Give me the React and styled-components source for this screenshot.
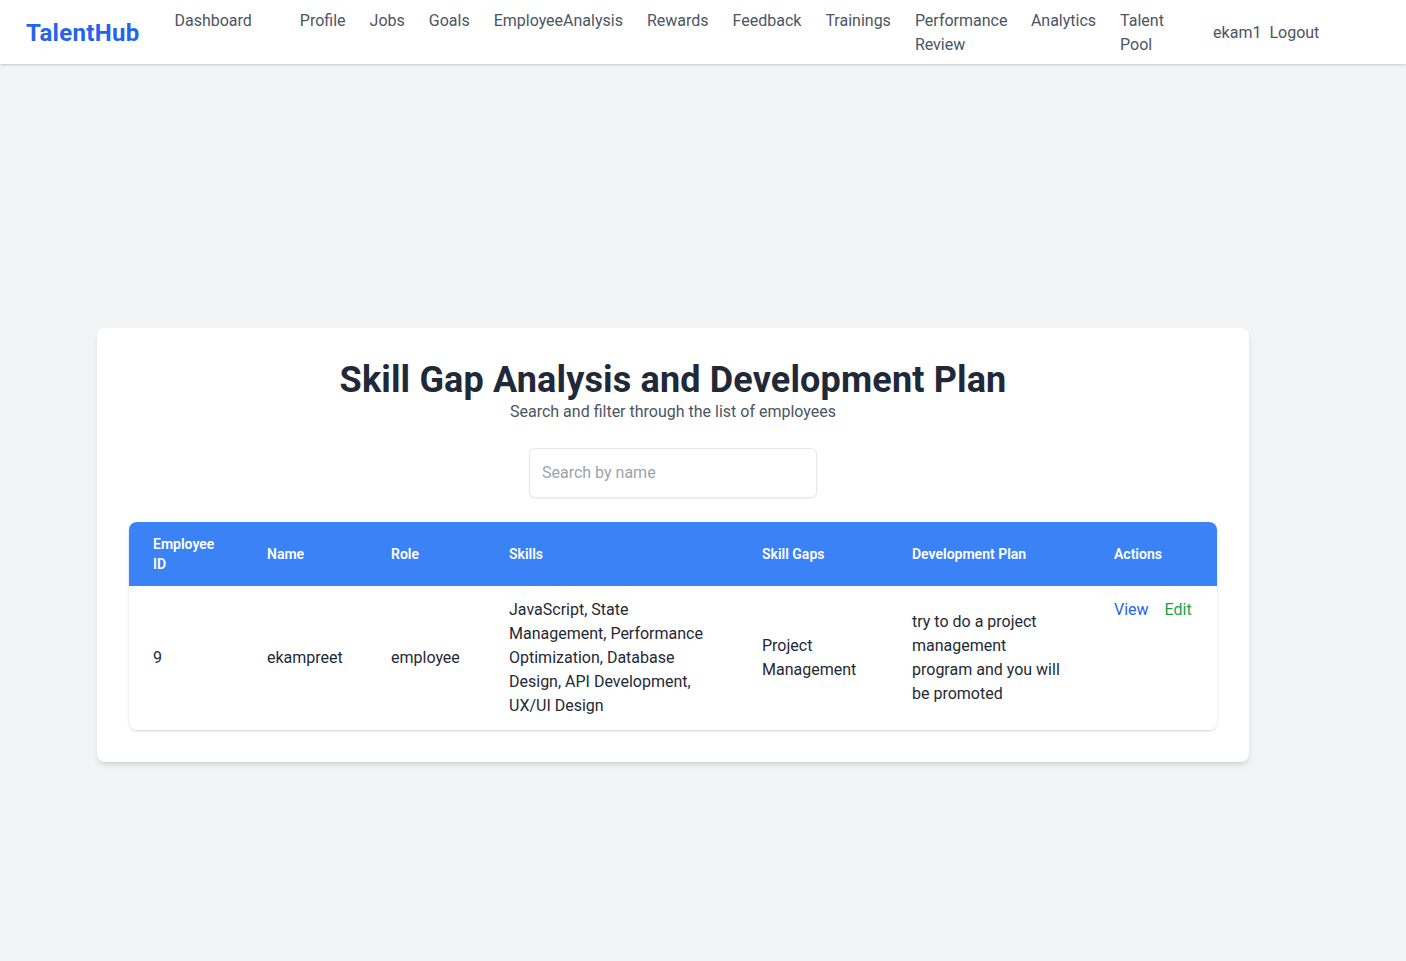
import React from "react";
import styled, { createGlobalStyle } from "styled-components";

const Global = createGlobalStyle`
  * { box-sizing: border-box; }
  html, body { margin: 0; padding: 0; }
  body {
    background: #f3f4f6;
    font-family: Roboto, "Noto Sans", "Liberation Sans", sans-serif;
    color: #1f2937;
  }
`;

const NavBar = styled.nav`
  height: 64px;
  background: #ffffff;
  box-shadow: 0 1px 3px rgba(0,0,0,0.12), 0 1px 2px rgba(0,0,0,0.06);
  display: flex;
  align-items: center;
  padding: 0 26px;
  position: relative;
  z-index: 1;
`;

const Logo = styled.a`
  font-size: 24px;
  line-height: 32px;
  font-weight: 700;
  color: #2563eb;
  text-decoration: none;
  margin-right: 35px;
  padding-top: 2px;
  letter-spacing: 0.3px;
`;

const NavLinks = styled.ul`
  list-style: none;
  margin: 0;
  padding: 0;
  display: flex;
  align-self: flex-start;
  padding-top: 9px;
  gap: 24px;
`;

const NavItem = styled.li`
  font-size: 16px;
  line-height: 24px;
  color: #4b5563;
  width: ${(p) => (p.$w ? `${p.$w}px` : "auto")};
  margin-right: ${(p) => (p.$extra ? `${p.$extra}px` : "0")};
`;

const UserArea = styled.div`
  margin-left: 41px;
  padding-top: 2px;
  display: flex;
  gap: 8px;
  font-size: 16px;
  line-height: 24px;
  color: #4b5563;
`;

const Main = styled.main`
  min-height: 100vh;
  display: flex;
  align-items: center;
  justify-content: center;
  padding-right: 60px;
`;

const Card = styled.section`
  width: 1152px;
  background: #ffffff;
  border-radius: 8px;
  box-shadow: 0 4px 6px -1px rgba(0,0,0,0.1), 0 2px 4px -2px rgba(0,0,0,0.1);
  padding: 32px;
  display: flex;
  flex-direction: column;
  align-items: center;
`;

const Title = styled.h1`
  margin: 0;
  font-size: 36px;
  line-height: 40px;
  font-weight: 700;
  color: #1f2937;
  text-align: center;
  letter-spacing: 0.15px;
`;

const Subtitle = styled.p`
  margin: 0;
  font-size: 16px;
  line-height: 24px;
  color: #4b5563;
  text-align: center;
`;

const SearchInput = styled.input`
  margin-top: 24px;
  width: 288px;
  height: 50px;
  padding: 12px;
  font-family: inherit;
  font-size: 16px;
  line-height: 24px;
  border: 1px solid #e5e7eb;
  border-radius: 6px;
  box-shadow: 0 1px 2px rgba(0,0,0,0.05);
  outline: none;
  color: #1f2937;
  &::placeholder { color: #9ca3af; }
`;

const TableWrap = styled.div`
  margin-top: 24px;
  width: 100%;
  border-radius: 8px;
  overflow: hidden;
  box-shadow: 0 1px 3px rgba(0,0,0,0.12), 0 1px 2px rgba(0,0,0,0.06);
`;

const Table = styled.table`
  width: 100%;
  border-collapse: collapse;
  table-layout: fixed;
`;

const HeadRow = styled.tr`
  background: #3b82f6;
`;

const Th = styled.th`
  padding: 12px 24px;
  text-align: left;
  font-size: 14px;
  line-height: 20px;
  font-weight: 600;
  color: #ffffff;
  height: 64px;
  vertical-align: middle;
`;

const Td = styled.td`
  padding: 12px 24px;
  font-size: 16px;
  line-height: 24px;
  color: #1f2937;
  vertical-align: ${(p) => (p.$top ? "top" : "middle")};
  background: #ffffff;
`;

const Action = styled.a`
  color: ${(p) => p.$color};
  text-decoration: none;
  margin-right: ${(p) => (p.$last ? "0" : "16px")};
  cursor: pointer;
`;

const cols = [
  { label: "Employee ID", w: 114 },
  { label: "Name", w: 124 },
  { label: "Role", w: 118 },
  { label: "Skills", w: 253 },
  { label: "Skill Gaps", w: 150 },
  { label: "Development Plan", w: 202 },
  { label: "Actions", w: 127 },
];

const navItems = [
  { t: "Dashboard", extra: 24 },
  { t: "Profile" },
  { t: "Jobs" },
  { t: "Goals" },
  { t: "EmployeeAnalysis" },
  { t: "Rewards" },
  { t: "Feedback" },
  { t: "Trainings" },
  { t: "Performance Review", w: 92 },
  { t: "Analytics" },
  { t: "Talent Pool", w: 52 },
];

export default function App() {
  return (
    <>
      <Global />
      <NavBar>
        <Logo>TalentHub</Logo>
        <NavLinks>
          {navItems.map((n) => (
            <NavItem key={n.t} $w={n.w} $extra={n.extra}>
              {n.t}
            </NavItem>
          ))}
        </NavLinks>
        <UserArea>
          <span>ekam1</span>
          <span>Logout</span>
        </UserArea>
      </NavBar>
      <Main>
        <Card>
          <Title>Skill Gap Analysis and Development Plan</Title>
          <Subtitle>Search and filter through the list of employees</Subtitle>
          <SearchInput placeholder="Search by name" />
          <TableWrap>
            <Table>
              <colgroup>
                {cols.map((c) => (
                  <col key={c.label} style={{ width: c.w }} />
                ))}
              </colgroup>
              <thead>
                <HeadRow>
                  {cols.map((c) => (
                    <Th key={c.label}>{c.label}</Th>
                  ))}
                </HeadRow>
              </thead>
              <tbody>
                <tr>
                  <Td>9</Td>
                  <Td>ekampreet</Td>
                  <Td>employee</Td>
                  <Td>
                    JavaScript, State Management, Performance Optimization,
                    Database Design, API Development, UX/UI Design
                  </Td>
                  <Td>Project Management</Td>
                  <Td>
                    try to do a project management program and you will be
                    promoted
                  </Td>
                  <Td $top>
                    <Action $color="#2563eb">View</Action>
                    <Action $color="#16a34a" $last>
                      Edit
                    </Action>
                  </Td>
                </tr>
              </tbody>
            </Table>
          </TableWrap>
        </Card>
      </Main>
    </>
  );
}
